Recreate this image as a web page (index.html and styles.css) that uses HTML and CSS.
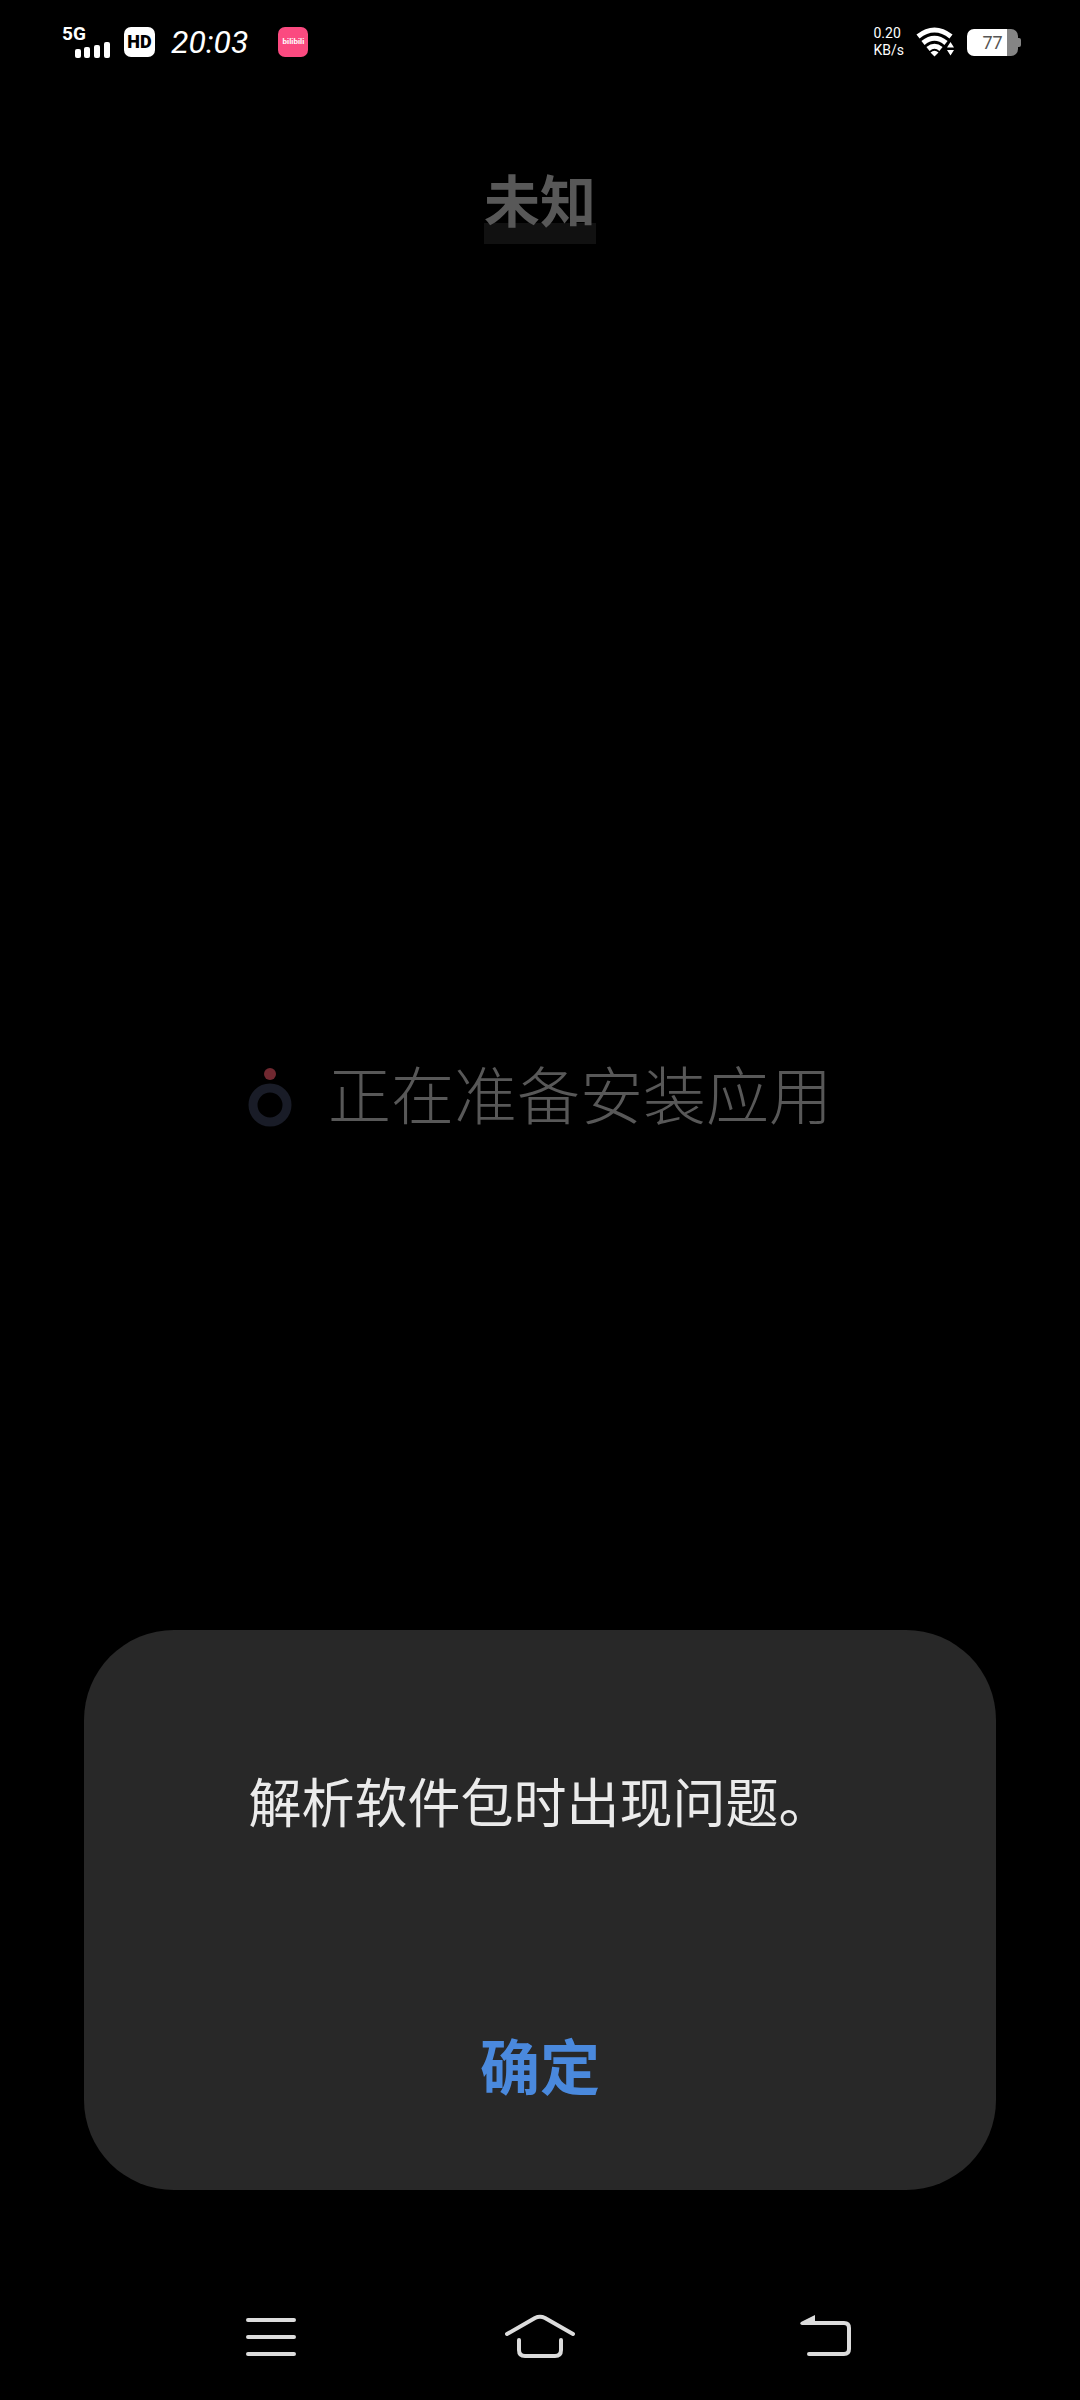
FILE: index.html
```html
<!DOCTYPE html>
<html lang="zh-CN">
<head>
    <meta charset="UTF-8">
    <meta name="viewport" content="width=device-width, initial-scale=1.0">
    <title>未知</title>
    <link rel="stylesheet" href="styles.css">
</head>
<body>
    <div class="status-bar">
        <div class="status-group">
            <div class="signal">
                <span class="signal-label">5G</span>
                <svg class="signal-bars" width="36" height="16" viewBox="0 0 36 16" fill="#fff">
                    <rect x="1" y="7" width="6" height="9" rx="2"/>
                    <rect x="10" y="5" width="6" height="11" rx="2"/>
                    <rect x="20" y="3" width="6" height="13" rx="2"/>
                    <rect x="30" y="0" width="6" height="16" rx="2"/>
                </svg>
            </div>
            <span class="hd-badge">HD</span>
            <span class="clock">20:03</span>
            <span class="app-badge">bilibili</span>
        </div>
        <div class="status-group">
            <div class="net-speed">
                <span>0.20</span>
                <span>KB/s</span>
            </div>
            <svg class="wifi" width="40" height="30" viewBox="0 0 40 30">
                <g fill="none" stroke="#fff" stroke-width="5">
                    <path d="M2 9.500Q18.500 -3.500 35 9.500"/>
                    <path d="M7 16Q18.500 6.500 30 16"/>
                    <path d="M12 22Q18.500 16.500 25 22"/>
                </g>
                <path d="M14.500 25.500Q18.500 22 22.500 25.500L18.500 29.500Z" fill="#fff"/>
                <path d="M31 20.500L34.500 15L38 20.500ZM31 23L34.500 28.500L38 23Z" fill="#fff"/>
            </svg>
            <div class="battery">
                <span class="battery-level">77</span>
            </div>
        </div>
    </div>

    <main class="installer">
        <h1 class="title">未知</h1>
        <div class="progress">
            <svg class="spinner" width="44" height="60" viewBox="0 0 44 60">
                <circle cx="22" cy="6" r="6" fill="#702830"/>
                <circle cx="22" cy="37" r="17" fill="none" stroke="#191c27" stroke-width="9"/>
            </svg>
            <p>正在准备安装应用</p>
        </div>

        <div class="dialog" role="alertdialog" aria-labelledby="dialogMessage">
            <p class="dialog-message" id="dialogMessage">解析软件包时出现问题。</p>
            <button class="dialog-button" type="button">确定</button>
        </div>
    </main>

    <nav class="nav-bar">
        <button class="nav-button" type="button" aria-label="菜单">
            <svg width="72" height="48" viewBox="0 0 72 48">
                <path d="M13 6H59M13 23H59M13 40H59"/>
            </svg>
        </button>
        <button class="nav-button" type="button" aria-label="主页">
            <svg width="72" height="48" viewBox="0 0 72 48">
                <path d="M3 20L31 4Q36 1.500 41 4L69 20"/>
                <path d="M15 26V36Q15 42 21 42H51Q57 42 57 36V26"/>
            </svg>
        </button>
        <button class="nav-button" type="button" aria-label="返回">
            <svg width="96" height="48" viewBox="-30 0 96 48">
                <path d="M14 9H52Q57 9 57 14V35Q57 40 52 40H17"/>
                <path class="arrow-head" d="M23 1V11H10Q7 10 9 8Z"/>
            </svg>
        </button>
    </nav>
</body>
</html>
```
FILE: styles.css
```css
* {
    margin: 0;
    padding: 0;
    box-sizing: border-box;
}

body {
    font-family: Roboto, 'Noto Sans CJK SC', sans-serif;
    background: #000;
    color: #fff;
    min-height: 100vh;
    display: flex;
    flex-direction: column;
}

button {
    font-family: inherit;
    background: none;
    border: none;
    cursor: pointer;
}

/* Status bar */
.status-bar {
    height: 84px;
    padding: 0 59px 0 62px;
    display: flex;
    align-items: center;
    justify-content: space-between;
}

.status-group {
    display: flex;
    align-items: center;
}

.signal {
    width: 48px;
    display: flex;
    flex-direction: column;
}

.signal-label {
    font-size: 19px;
    font-weight: 700;
    line-height: 16px;
}

.signal-bars {
    align-self: flex-end;
}

.hd-badge {
    width: 31px;
    height: 30px;
    margin-left: 14px;
    border-radius: 7px;
    background: #fff;
    color: #000;
    font-size: 18px;
    font-weight: 900;
    line-height: 30px;
    text-align: center;
}

.clock {
    margin-left: 16px;
    font-size: 32px;
    font-style: italic;
    line-height: 32px;
}

.app-badge {
    width: 30px;
    height: 30px;
    margin-left: 30px;
    border-radius: 7px;
    background: #fb4a80;
    font-size: 8px;
    font-weight: 700;
    line-height: 30px;
    text-align: center;
}

.net-speed {
    display: flex;
    flex-direction: column;
    font-size: 14px;
    line-height: 17px;
}

.wifi {
    margin-left: 12px;
}

.battery {
    position: relative;
    width: 51px;
    height: 27px;
    margin-left: 11px;
    margin-right: 3px;
    border-radius: 7px;
    background: linear-gradient(90deg, #fff 78%, #858585 78%);
    color: #555;
    text-align: center;
}

.battery::after {
    content: "";
    position: absolute;
    top: 9px;
    right: -3px;
    width: 3px;
    height: 9px;
    border-radius: 0 2px 2px 0;
    background: #858585;
}

.battery-level {
    display: block;
    font-size: 18px;
    line-height: 27px;
}

/* Installer screen behind the dialog */
.installer {
    position: relative;
    flex: 1;
    display: flex;
    flex-direction: column;
    align-items: center;
    padding: 78px 84px 0;
    color: #585858;
}

.title {
    font-size: 56px;
    font-weight: 700;
    line-height: 82px;
    background: linear-gradient(#111, #111) bottom / 100% 21px no-repeat;
}

.progress {
    flex: 1;
    display: flex;
    align-items: center;
    gap: 36px;
    padding-bottom: 317px;
    font-size: 63px;
    font-weight: 300;
    line-height: 80px;
}

/* Dialog */
.dialog {
    position: absolute;
    left: 84px;
    right: 84px;
    bottom: 78px;
    padding: 135px 48px 76px;
    border-radius: 90px;
    background: #282828;
    display: flex;
    flex-direction: column;
    align-items: center;
    gap: 180px;
}

.dialog-message {
    color: #ebebeb;
    font-size: 53px;
    line-height: 80px;
}

.dialog-button {
    padding: 0 48px;
    color: #4a89dd;
    font-size: 60px;
    font-weight: 700;
    line-height: 89px;
}

/* Navigation bar */
.nav-bar {
    height: 132px;
    padding: 8px 136px 0;
    display: flex;
    align-items: center;
    justify-content: space-between;
}

.nav-button {
    width: 269px;
    height: 96px;
    display: flex;
    align-items: center;
    justify-content: center;
}

.nav-button svg {
    fill: none;
    stroke: #dcdcdc;
    stroke-width: 4;
    stroke-linecap: round;
    stroke-linejoin: round;
}

.nav-button .arrow-head {
    fill: #dcdcdc;
    stroke: none;
}
```
